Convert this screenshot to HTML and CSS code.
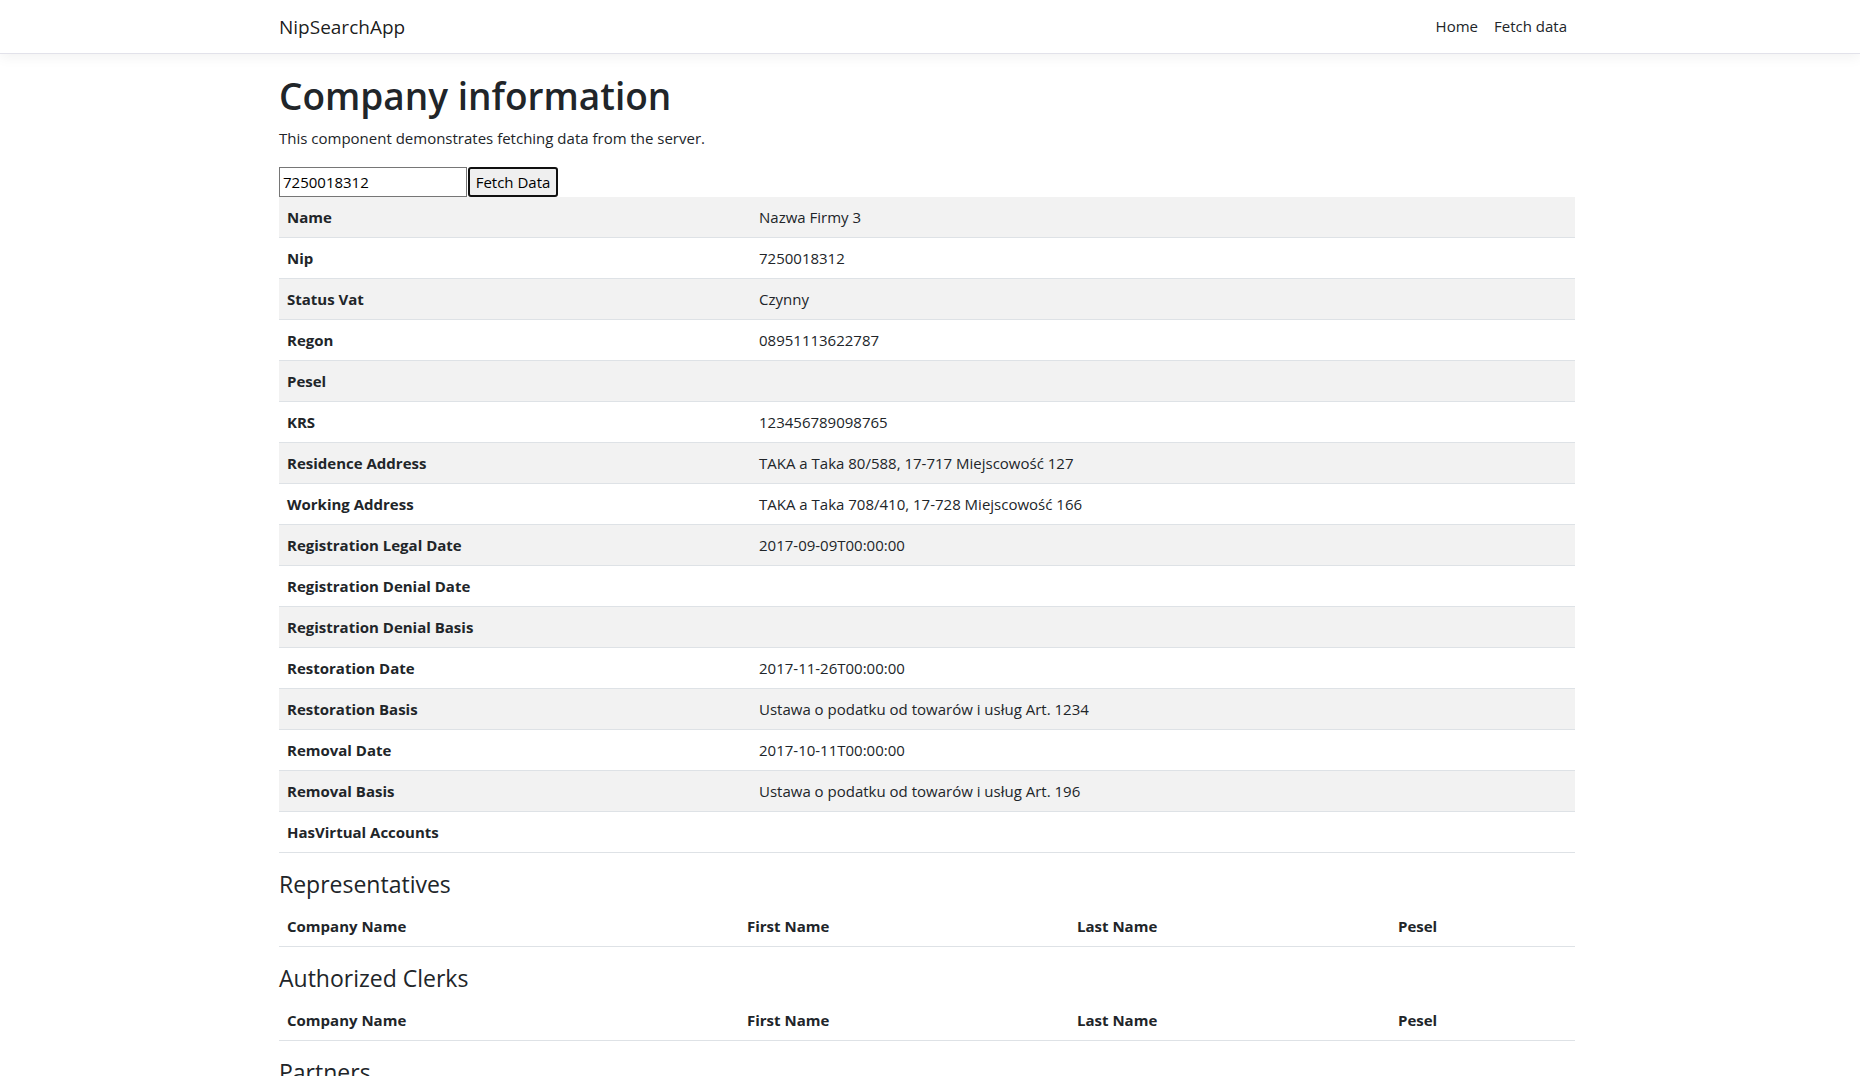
FILE: index.html
```html
<!DOCTYPE html>
<html lang="en">
<head>
<meta charset="utf-8">
<title>NipSearchApp</title>
<link rel="stylesheet" href="styles.css">
</head>
<body>
<header class="navbar">
  <div class="wrap nav-inner">
    <a class="brand" href="#">NipSearchApp</a>
    <ul class="nav-links">
      <li><a href="#">Home</a></li>
      <li><a href="#">Fetch data</a></li>
    </ul>
  </div>
</header>
<main class="wrap">
  <h1 class="title">Company information</h1>
  <p class="lead">This component demonstrates fetching data from the server.</p>
  <div class="search">
    <input class="nip-input" type="text" value="7250018312"><button class="fetch-btn">Fetch Data</button>
  </div>
  <table class="info">
    <tbody>
      <tr><th class="label">Name</th><td>Nazwa Firmy 3</td></tr>
      <tr><th class="label">Nip</th><td>7250018312</td></tr>
      <tr><th class="label">Status Vat</th><td>Czynny</td></tr>
      <tr><th class="label">Regon</th><td>08951113622787</td></tr>
      <tr><th class="label">Pesel</th><td></td></tr>
      <tr><th class="label">KRS</th><td>123456789098765</td></tr>
      <tr><th class="label">Residence Address</th><td>TAKA a Taka 80/588, 17-717 Miejscowość 127</td></tr>
      <tr><th class="label">Working Address</th><td>TAKA a Taka 708/410, 17-728 Miejscowość 166</td></tr>
      <tr><th class="label">Registration Legal Date</th><td>2017-09-09T00:00:00</td></tr>
      <tr><th class="label">Registration Denial Date</th><td></td></tr>
      <tr><th class="label">Registration Denial Basis</th><td></td></tr>
      <tr><th class="label">Restoration Date</th><td>2017-11-26T00:00:00</td></tr>
      <tr><th class="label">Restoration Basis</th><td>Ustawa o podatku od towarów i usług Art. 1234</td></tr>
      <tr><th class="label">Removal Date</th><td>2017-10-11T00:00:00</td></tr>
      <tr><th class="label">Removal Basis</th><td>Ustawa o podatku od towarów i usług Art. 196</td></tr>
      <tr><th class="label">HasVirtual Accounts</th><td></td></tr>
    </tbody>
  </table>

  <h4 class="section">Representatives</h4>
  <table class="people">
    <thead>
      <tr><th class="c1">Company Name</th><th class="c2">First Name</th><th class="c3">Last Name</th><th class="c4">Pesel</th></tr>
    </thead>
    <tbody></tbody>
  </table>

  <h4 class="section">Authorized Clerks</h4>
  <table class="people">
    <thead>
      <tr><th class="c1">Company Name</th><th class="c2">First Name</th><th class="c3">Last Name</th><th class="c4">Pesel</th></tr>
    </thead>
    <tbody></tbody>
  </table>

  <h4 class="section">Partners</h4>
  <table class="people">
    <thead>
      <tr><th class="c1">Company Name</th><th class="c2">First Name</th><th class="c3">Last Name</th><th class="c4">Pesel</th></tr>
    </thead>
    <tbody></tbody>
  </table>
</main>
</body>
</html>
```

FILE: styles.css
```css
html, body {
  margin: 0;
  padding: 0;
  background: #fff;
}

body {
  font-family: "Segoe UI", "Open Sans", "Noto Sans", sans-serif;
  font-size: 15px;
  line-height: 24px;
  color: #212529;
}

.wrap {
  width: 1296px;
  margin-left: calc(50% - 651px);
}

/* navbar */
.navbar {
  height: 53px;
  border-bottom: 1px solid #e2e2ea;
  box-shadow: 0 4px 12px rgba(0, 0, 0, 0.05);
  margin-bottom: 16px;
  background: #fff;
}

.nav-inner {
  height: 53px;
  display: flex;
  align-items: center;
  justify-content: space-between;
}

.brand {
  font-size: 19px;
  line-height: 30px;
  color: rgba(0, 0, 0, 0.9);
  text-decoration: none;
}

.nav-links {
  display: flex;
  list-style: none;
  margin: 0;
  padding: 0 0 2px;
}

.nav-links a {
  display: block;
  padding: 0 8px;
  color: #212529;
  text-decoration: none;
  line-height: 24px;
}

/* heading */
.title {
  margin: 0 0 6px;
  padding-top: 2px;
  font-size: 37px;
  font-weight: 600;
  line-height: 48px;
}

.lead {
  margin: 0 0 16px;
}

.search {
  display: flex;
  gap: 1px;
  padding-top: 1px;
}

.nip-input {
  box-sizing: border-box;
  width: 188px;
  height: 30px;
  border: 1px solid #767676;
  border-radius: 0;
  padding: 0 3px;
  font: inherit;
  color: #000;
  background: #fff;
}

.fetch-btn {
  box-sizing: border-box;
  width: 90px;
  height: 30px;
  border: 2px solid #101010;
  border-radius: 3px;
  background: #efefef;
  padding: 0;
  font: inherit;
  color: #000;
}

/* tables */
table {
  width: 100%;
  border-collapse: collapse;
  margin-bottom: 16px;
}

th, td {
  padding: 8px;
  border-bottom: 1px solid #dee2e6;
  text-align: left;
  vertical-align: top;
}

th {
  font-weight: 700;
}

.info tr:nth-child(odd) {
  background: #f2f2f2;
}

.info .label {
  box-sizing: border-box;
  width: 472px;
}

.people {
  table-layout: fixed;
}

.people .c1 { width: 444px; }
.people .c2 { width: 314px; }
.people .c3 { width: 305px; }
.people .c4 { width: 169px; }

.section {
  margin: 0 0 8px;
  padding-top: 1px;
  height: 27.8px;
  font-size: 23px;
  font-weight: 400;
  line-height: 28.8px;
}
```
